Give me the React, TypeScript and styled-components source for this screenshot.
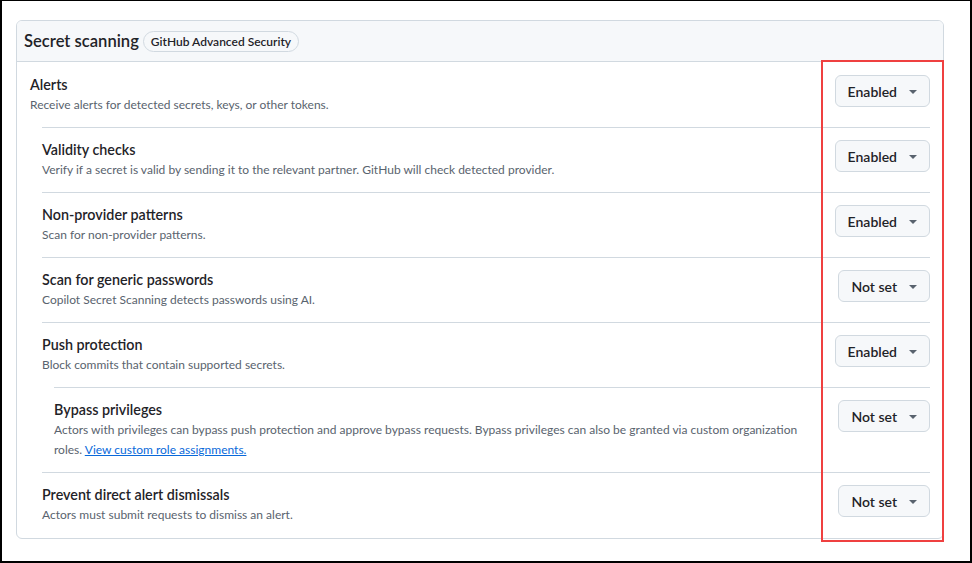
import React from "react";
import styled, { createGlobalStyle } from "styled-components";

const Global = createGlobalStyle`
  html, body { margin: 0; padding: 0; background: #ffffff; }
  body { font-family: Lato, "Noto Sans", "Liberation Sans", sans-serif; color: #1f2328; }
  * { box-sizing: border-box; }
`;

const Frame = styled.div`
  position: relative;
  width: 972px;
  height: 563px;
  border-style: solid;
  border-color: #000000;
  border-width: 1px 2px 2px 2px;
  padding: 19px 0 0 14px;
  background: #ffffff;
`;

const Card = styled.section`
  width: 928px;
  border: 1px solid #d1d9e0;
  border-radius: 6px;
  overflow: hidden;
`;

const Header = styled.header`
  display: flex;
  align-items: center;
  gap: 4px;
  height: 41px;
  padding: 0 7px;
  background: #f6f8fa;
  border-bottom: 1px solid #d1d9e0;
`;

const Title = styled.h2`
  margin: 0;
  font-size: 16.6px;
  font-weight: 600;
  line-height: 20px;
  color: #1f2328;
`;

const Badge = styled.span`
  display: inline-flex;
  align-items: center;
  height: 21px;
  padding: 0 7px;
  border: 1px solid #d1d9e0;
  border-radius: 999px;
  font-size: 12px;
  font-weight: 600;
  color: #1f2328;
`;

const Body = styled.div`
  padding: 0 13px;
`;

const Row = styled.div<{ $level: number; $first?: boolean }>`
  display: flex;
  justify-content: space-between;
  align-items: flex-start;
  gap: 30px;
  margin-left: ${(p) => p.$level * 12}px;
  padding: 12px 0 12px;
  padding-top: ${(p) => (p.$first ? "13px" : "12px")};
  border-top: ${(p) => (p.$first ? "none" : "1px solid #d1d9e0")};
  &:last-child {
    padding-bottom: 13px;
  }
`;

const Text = styled.div`
  flex: 1;
  min-width: 0;
`;

const SettingTitle = styled.div`
  font-size: 14.3px;
  font-weight: 600;
  line-height: 20px;
  color: #1f2328;
`;

const Desc = styled.div`
  font-size: 12px;
  line-height: 20px;
  color: #59636e;
`;

const Link = styled.a`
  color: #0969da;
  text-decoration: underline;
`;

const Select = styled.button`
  flex: none;
  display: inline-flex;
  align-items: center;
  gap: 12px;
  height: 32px;
  padding: 0 12px;
  border: 1px solid #d1d9e0;
  border-radius: 6px;
  background: #f6f8fa;
  font-family: inherit;
  font-size: 14px;
  font-weight: 600;
  color: #1f2328;
  cursor: pointer;
`;

const Caret = styled.span`
  width: 0;
  height: 0;
  border-left: 4px solid transparent;
  border-right: 4px solid transparent;
  border-top: 4px solid #59636e;
  margin-top: 2px;
`;

const Highlight = styled.div`
  position: absolute;
  left: 819px;
  top: 59px;
  width: 123px;
  height: 482px;
  border: 2px solid #ef4040;
  pointer-events: none;
`;

type Setting = {
  title: string;
  desc: React.ReactNode;
  value: string;
  level: number;
};

const settings: Setting[] = [
  { title: "Alerts", desc: "Receive alerts for detected secrets, keys, or other tokens.", value: "Enabled", level: 0 },
  {
    title: "Validity checks",
    desc: "Verify if a secret is valid by sending it to the relevant partner. GitHub will check detected provider.",
    value: "Enabled",
    level: 1,
  },
  { title: "Non-provider patterns", desc: "Scan for non-provider patterns.", value: "Enabled", level: 1 },
  { title: "Scan for generic passwords", desc: "Copilot Secret Scanning detects passwords using AI.", value: "Not set", level: 1 },
  { title: "Push protection", desc: "Block commits that contain supported secrets.", value: "Enabled", level: 1 },
  {
    title: "Bypass privileges",
    desc: (
      <>
        Actors with privileges can bypass push protection and approve bypass requests. Bypass privileges can also be
        granted via custom organization roles. <Link href="#">View custom role assignments.</Link>
      </>
    ),
    value: "Not set",
    level: 2,
  },
  { title: "Prevent direct alert dismissals", desc: "Actors must submit requests to dismiss an alert.", value: "Not set", level: 1 },
];

export default function App() {
  return (
    <>
      <Global />
      <Frame>
        <Card>
          <Header>
            <Title>Secret scanning</Title>
            <Badge>GitHub Advanced Security</Badge>
          </Header>
          <Body>
            {settings.map((s, i) => (
              <Row key={s.title} $level={s.level} $first={i === 0}>
                <Text>
                  <SettingTitle>{s.title}</SettingTitle>
                  <Desc>{s.desc}</Desc>
                </Text>
                <Select type="button">
                  {s.value}
                  <Caret />
                </Select>
              </Row>
            ))}
          </Body>
        </Card>
        <Highlight />
      </Frame>
    </>
  );
}
